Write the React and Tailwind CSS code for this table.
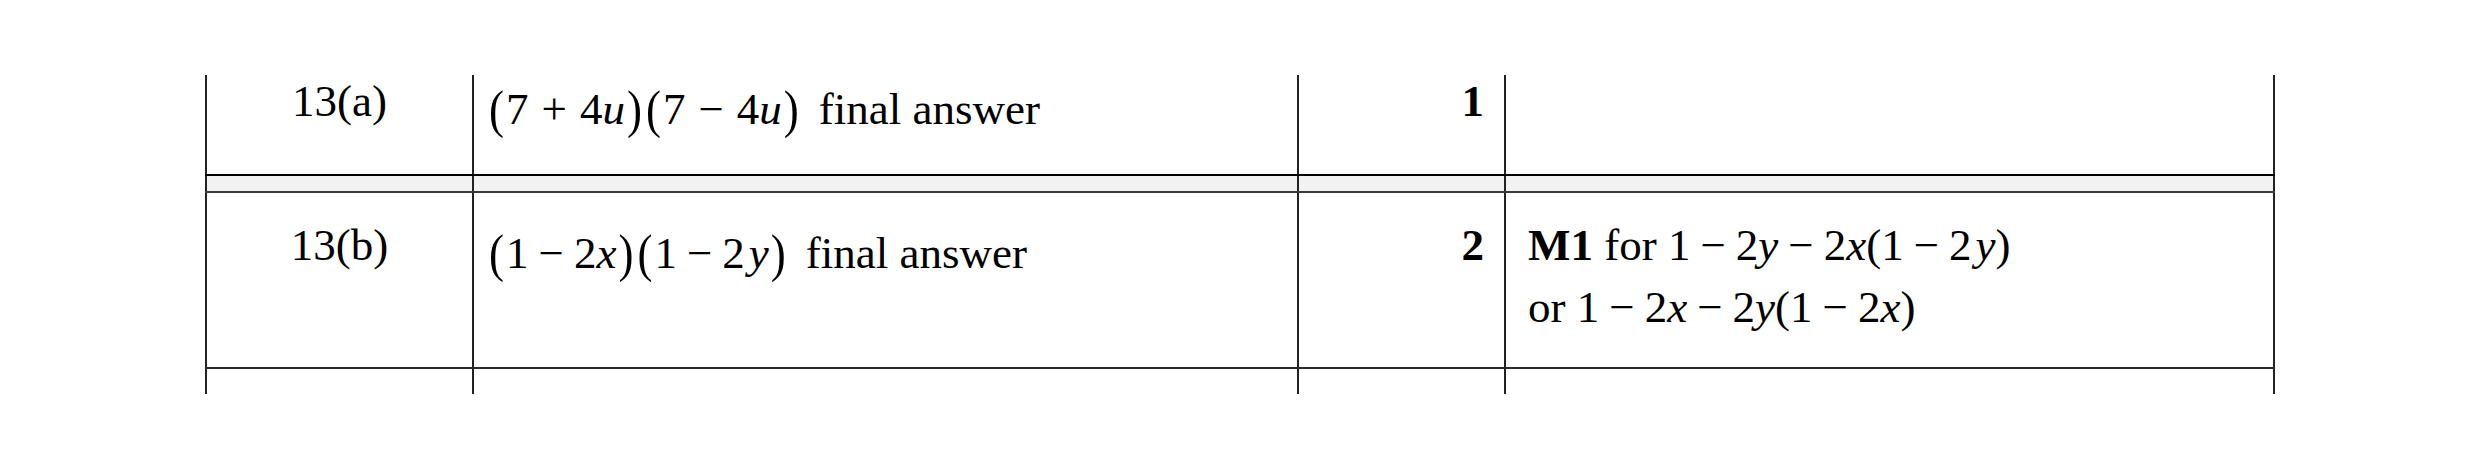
import React from 'react';

const COLS = 'grid grid-cols-[267px_825px_207px_771px]';
const CELL = 'border-l-2 border-[#222]';
const LAST = 'border-x-2 border-[#222]';

// tall brackets like the equation editor draws them
function P({ children }) {
    return <span className="inline-block px-[2px] scale-y-[1.17]">{children}</span>;
}

function Minus({ wide }) {
    return <span className={wide ? 'mx-[13px]' : 'mx-[10px]'}>−</span>;
}

function Plus() {
    return <span className="mx-[13px]">+</span>;
}

function V({ children, className = '' }) {
    return <i className={className}>{children}</i>;
}

export default function App() {
    return (
        <div className="h-[470px] w-[2481px] bg-white pt-[75px] pl-[205px] text-black text-[45px] font-['Liberation_Serif','Times_New_Roman',serif]">
            <div className="w-[2070px]">
                {/* 13(a) */}
                <div className={`${COLS} h-[99px]`}>
                    <div className={`${CELL} text-center leading-[52px]`}>13(a)</div>
                    <div className={`${CELL} pl-[13px] pt-[8px] leading-[52px] whitespace-nowrap`}>
                        <P>(</P>7<Plus />4<V>u</V><P>)</P><P>(</P>7<Minus wide />4<V>u</V><P>)</P>
                        <span className="ml-[18px]">final answer</span>
                    </div>
                    <div className={`${CELL} text-right pr-[20px] font-bold leading-[52px]`}>1</div>
                    <div className={LAST}></div>
                </div>

                {/* divider band */}
                <div className={`${COLS} h-[19px] border-t-2 border-b-2 border-t-black border-b-[#3a3a3a] bg-[#f2f2f2]`}>
                    <div className={CELL}></div>
                    <div className={CELL}></div>
                    <div className={CELL}></div>
                    <div className={LAST}></div>
                </div>

                {/* 13(b) */}
                <div className={`${COLS} h-[176px] border-b-2 border-[#2a2a2a]`}>
                    <div className={`${CELL} text-center pt-[26px] leading-[52px]`}>13(b)</div>
                    <div className={`${CELL} pl-[13px] pt-[34px] leading-[52px] whitespace-nowrap`}>
                        <P>(</P>1<Minus />2<V>x</V><P>)</P><P>(</P>1<Minus />2<V className="ml-[4px]">y</V><P>)</P>
                        <span className="ml-[18px]">final answer</span>
                    </div>
                    <div className={`${CELL} text-right pr-[20px] pt-[26px] font-bold leading-[52px]`}>2</div>
                    <div className={`${LAST} pl-[22px] pt-[21px] leading-[62px] whitespace-nowrap`}>
                        <div>
                            <b>M1</b> for 1<Minus />2<V>y</V><Minus />2<V>x</V>(1<Minus />2<V className="ml-[4px]">y</V>)
                        </div>
                        <div>
                            or 1<Minus />2<V>x</V><Minus />2<V>y</V>(1<Minus />2<V>x</V>)
                        </div>
                    </div>
                </div>

                {/* start of next row */}
                <div className={`${COLS} h-[25px]`}>
                    <div className={CELL}></div>
                    <div className={CELL}></div>
                    <div className={CELL}></div>
                    <div className={LAST}></div>
                </div>
            </div>
        </div>
    );
}
